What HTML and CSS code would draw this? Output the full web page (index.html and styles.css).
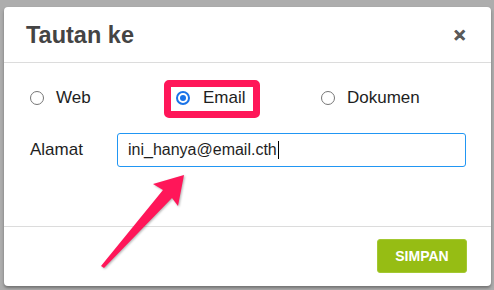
FILE: index.html
```html
<!DOCTYPE html>
<html lang="id">
<head>
<meta charset="utf-8">
<title>Tautan ke</title>
<link rel="stylesheet" href="styles.css">
</head>
<body>
<div class="dialog">
  <div class="header">
    <h1 class="title">Tautan ke</h1>
    <span class="close">&#x2715;</span>
  </div>
  <div class="content">
    <div class="radios">
      <label class="opt"><span class="radio"></span><span>Web</span></label>
      <label class="opt hl"><span class="radio checked"></span><span>Email</span></label>
      <label class="opt"><span class="radio"></span><span>Dokumen</span></label>
    </div>
    <div class="field">
      <span class="label">Alamat</span>
      <div class="input">ini_hanya@email.cth<span class="caret"></span></div>
    </div>
  </div>
  <div class="footer">
    <button class="save">SIMPAN</button>
  </div>
</div>
<svg class="arrow" width="494" height="290" viewBox="0 0 494 290">
  <polygon points="184,175 153,184 163,190 101,266 104,268 172,198 178,206" fill="#ff1659"/>
</svg>
</body>
</html>
```
FILE: styles.css
```css
html, body {
  margin: 0;
  padding: 0;
}
body {
  width: 494px;
  height: 290px;
  background: #adadad;
  font-family: "Liberation Sans", Arial, sans-serif;
  position: relative;
  overflow: hidden;
}
.dialog {
  margin: 7px 3px 0 4px;
  width: 487px;
  height: 279px;
  background: #fff;
  border-radius: 4px;
  box-shadow: 0 2px 3px rgba(0,0,0,0.35);
  display: flex;
  flex-direction: column;
}
.header {
  height: 55px;
  border-bottom: 1px solid #dcdcdc;
  display: flex;
  align-items: center;
  justify-content: space-between;
  padding: 0 25px 0 22px;
}
.title {
  margin: 0;
  font-size: 23.5px;
  font-weight: bold;
  color: #444;
  line-height: 28px;
  padding-top: 1px;
}
.close {
  font-size: 16px;
  font-weight: bold;
  color: #5a5a5a;
  line-height: 16px;
  margin-top: 3px;
  -webkit-text-stroke: 0.6px #5a5a5a;
}
.content {
  flex: 1;
  padding: 25px 25px 0 26px;
  border-bottom: 1px solid #dcdcdc;
}
.radios {
  display: grid;
  grid-template-columns: 146px 145px 1fr;
  height: 20px;
  align-items: center;
}
.opt {
  display: flex;
  align-items: center;
  gap: 12px;
  font-size: 17px;
  color: #1e1e1e;
  line-height: 20px;
  height: 20px;
  position: relative;
}
.hl::before {
  content: "";
  position: absolute;
  left: -12px;
  top: -8px;
  width: 96px;
  height: 38px;
  box-sizing: border-box;
  border: 7px solid #ff1659;
  border-radius: 5px;
}
.hl {
  gap: 13px;
}
.radio {
  width: 12px;
  height: 12px;
  border: 1px solid #767676;
  border-radius: 50%;
  box-sizing: content-box;
  flex: none;
  position: relative;
}
.radio.checked {
  border: 2px solid #1a73e8;
  width: 10px;
  height: 10px;
}
.radio.checked::after {
  content: "";
  position: absolute;
  left: 2px;
  top: 2px;
  width: 6px;
  height: 6px;
  border-radius: 50%;
  background: #1a73e8;
}
.field {
  margin-top: 25px;
  display: flex;
  align-items: center;
}
.label {
  width: 87px;
  font-size: 17px;
  color: #1e1e1e;
  padding-left: 0;
}
.input {
  flex: 1;
  height: 34px;
  box-sizing: border-box;
  border: 1px solid #2196f3;
  border-radius: 3px;
  padding: 0 10px;
  font-size: 16px;
  color: #1e1e1e;
  display: flex;
  align-items: center;
}
.caret {
  display: inline-block;
  width: 1px;
  height: 18px;
  background: #000;
  margin-left: 1px;
}
.footer {
  height: 59px;
  display: flex;
  align-items: center;
  justify-content: flex-end;
  padding-right: 24px;
}
.save {
  width: 90px;
  height: 34px;
  background: #96bd14;
  border: 1px solid #a3c831;
  border-radius: 3px;
  color: #fff;
  font-family: "Liberation Sans", Arial, sans-serif;
  font-size: 14px;
  font-weight: bold;
  padding: 0;
  margin-top: -1px;
}
.arrow {
  position: absolute;
  left: 0;
  top: 0;
  pointer-events: none;
  filter: drop-shadow(1px 1px 1px rgba(0,0,0,0.3));
}
```
